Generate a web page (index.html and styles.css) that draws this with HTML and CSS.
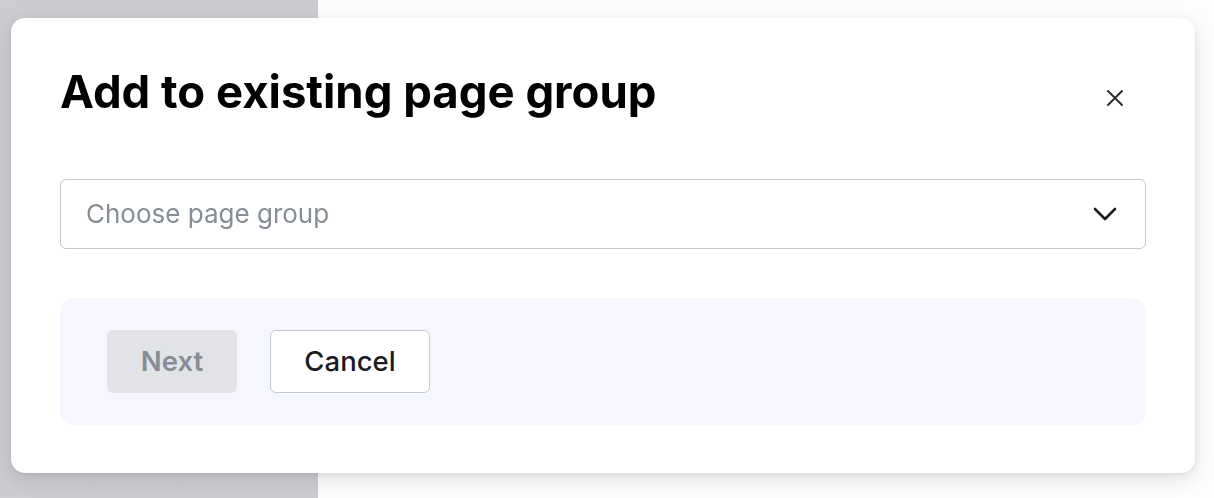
FILE: index.html
```html
<!DOCTYPE html>
<html>
<head>
<meta charset="utf-8">
<link rel="stylesheet" href="styles.css">
</head>
<body>
<div class="app">
  <aside class="side">
    <div class="col"></div>
    <div class="col"></div>
    <div class="col"></div>
  </aside>
  <main class="content"></main>
</div>
<div class="overlay">
  <div class="modal">
    <div class="modal-head">
      <h1 class="title">Add to existing page group</h1>
      <button class="close" aria-label="Close">
        <svg width="18" height="18" viewBox="0 0 18 18"><path d="M2 2L16 16M16 2L2 16" stroke="#2b2d31" stroke-width="2" stroke-linecap="round"/></svg>
      </button>
    </div>
    <div class="select">
      <span class="placeholder">Choose page group</span>
      <svg class="chev" width="24" height="14" viewBox="0 0 24 14"><path d="M2 2L12 12L22 2" fill="none" stroke="#1b1c1f" stroke-width="2.6" stroke-linecap="round" stroke-linejoin="round"/></svg>
    </div>
    <div class="footer">
      <button class="btn btn-next">Next</button>
      <button class="btn btn-cancel">Cancel</button>
    </div>
  </div>
</div>
</body>
</html>
```
FILE: styles.css
```css
* { box-sizing: border-box; }
html, body { margin: 0; padding: 0; }
body {
  width: 1214px;
  height: 498px;
  overflow: hidden;
  font-family: Inter, "Noto Sans", sans-serif;
  background: #ffffff;
}
.app {
  display: flex;
  height: 498px;
}
.side {
  width: 318px;
  display: grid;
  grid-template-columns: 95px 82px 1fr;
  background: #cdcdd1;
}
.side .col { border-right: 1px solid #c9c9ce; }
.side .col:last-child { border-right: 0; }
.content { flex: 1; background: #fdfdfd; }

.overlay {
  position: fixed;
  inset: 0;
  padding: 18px 19px 25px 11px;
  display: flex;
}
.modal {
  flex: 1;
  background: #ffffff;
  border-radius: 14px;
  box-shadow: 0 6px 20px rgba(0,0,0,0.12), 0 1px 4px rgba(0,0,0,0.08);
  padding: 42px 49px 48px 49px;
  display: flex;
  flex-direction: column;
}
.modal-head {
  display: flex;
  align-items: flex-start;
  justify-content: space-between;
  height: 63px;
}
.title {
  margin: 0;
  font-size: 45.5px;
  font-weight: 700;
  letter-spacing: 0;
  color: #000;
  line-height: 63px;
}
.close {
  border: 0;
  background: none;
  padding: 0;
  width: 18px;
  height: 18px;
  margin-top: 29px;
  margin-right: 22px;
  display: flex;
}
.select {
  margin-top: 56px;
  height: 70px;
  border: 1.5px solid #c5c8ce;
  border-radius: 6px;
  display: flex;
  align-items: center;
  justify-content: space-between;
  padding: 0 28px 0 25px;
}
.placeholder {
  font-size: 26px;
  color: #878d96;
}
.footer {
  margin-top: 49px;
  height: 128px;
  background: #f6f6fe;
  border-radius: 14px;
  display: flex;
  align-items: center;
  gap: 33px;
  padding: 0 47px;
}
.btn {
  height: 63px;
  border-radius: 6px;
  font-family: Inter, "Noto Sans", sans-serif;
  font-size: 27.5px;
  font-weight: 500;
  padding: 0;
}
.btn-next {
  width: 130px;
  border: 0;
  background: #e2e3e7;
  color: #878d96;
  font-weight: 600;
}
.btn-cancel {
  width: 160px;
  border: 1.5px solid #c5c8ce;
  background: #fff;
  color: #1a1b1e;
}
```
